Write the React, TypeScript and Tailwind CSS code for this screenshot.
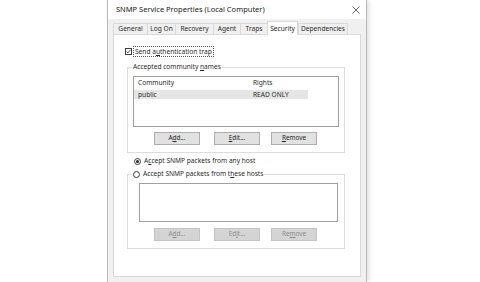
import React from "react";

// tab strip of the property sheet: label + pixel width
const tabs: [string, number][] = [
  ["General", 34],
  ["Log On", 28],
  ["Recovery", 38],
  ["Agent", 27],
  ["Traps", 27],
  ["Security", 31],
  ["Dependencies", 50],
];

const U = ({ children }: { children: React.ReactNode }) => (
  <span className="underline underline-offset-[1px] decoration-[0.5px]">{children}</span>
);

const Btn = ({ children, disabled }: { children: React.ReactNode; disabled?: boolean }) => (
  <div
    className={
      disabled
        ? "w-[46px] h-[13px] flex items-center justify-center border border-[#c4c4c4] bg-[#d4d4d4] text-[#8c8c8c] text-[6.4px] leading-none"
        : "w-[46px] h-[13px] flex items-center justify-center border border-[#adadad] bg-[#e1e1e1] text-[#262626] text-[6.4px] leading-none"
    }
  >
    {children}
  </div>
);

const Radio = ({ checked }: { checked?: boolean }) => (
  <div className="w-[7px] h-[7px] rounded-full border border-[#3a3a3a] bg-white flex items-center justify-center shrink-0">
    {checked && <div className="w-[3px] h-[3px] rounded-full bg-[#222]" />}
  </div>
);

export default function App() {
  return (
    <div className="w-[480px] h-[282px] bg-white overflow-hidden font-['Noto_Sans',sans-serif] text-[#2a2a2a] text-[6.6px]">
      <div className="ml-[107px] w-[260px] h-[282px] border-x border-[#b9b9b9] bg-[#f0f0f0] flex flex-col shadow-[2px_0_5px_rgba(0,0,0,0.12)]">
        {/* title bar */}
        <div className="h-[19px] bg-white flex items-center justify-between pl-[8px] pr-[6px] shrink-0">
          <span className="text-[7.5px] text-[#1a1a1a]">SNMP Service Properties (Local Computer)</span>
          <svg width="8" height="8" viewBox="0 0 8 8">
            <path d="M0.5 0.5L7.5 7.5M7.5 0.5L0.5 7.5" stroke="#444" strokeWidth="0.8" />
          </svg>
        </div>

        {/* tabs */}
        <div className="h-[15px] flex items-end ml-[5px] shrink-0">
          {tabs.map(([name, w]) =>
            name === "Security" ? (
              <div
                key={name}
                style={{ width: w }}
                className="h-[14px] -mb-[1px] relative z-10 bg-white border-x border-t border-[#d9d9d9] flex items-center justify-center text-[#1a1a1a]"
              >
                {name}
              </div>
            ) : (
              <div
                key={name}
                style={{ width: w }}
                className="h-[11px] bg-[#f0f0f0] border-t border-l border-[#d9d9d9] last:border-r flex items-center justify-center"
              >
                {name}
              </div>
            )
          )}
        </div>

        {/* tab page */}
        <div className="mx-[5px] mb-[5px] flex-1 bg-white border border-[#d9d9d9] flex flex-col">
          <div className="mt-[11px] ml-[11px] h-[11px] flex items-center">
            <div className="w-[7px] h-[7px] border border-[#3a3a3a] flex items-center justify-center">
              <svg width="5" height="5" viewBox="0 0 5 5">
                <path d="M0.6 2.6L1.9 3.9L4.4 0.9" stroke="#222" strokeWidth="0.8" fill="none" />
              </svg>
            </div>
            <div className="ml-[1px] h-[11px] px-[1px] border border-dotted border-[#555] flex items-center">
              Send a<U>u</U>thentication trap
            </div>
          </div>

          {/* accepted community names */}
          <div className="mt-[10px] ml-[13px] w-[218px] h-[86px] border border-[#dcdcdc] flex flex-col">
            <div className="-mt-[6px] ml-[4px] h-[10px] leading-[10px] px-[1px] bg-white w-fit">
              Accepted community <U>n</U>ames
            </div>
            <div className="mt-[4px] ml-[5px] w-[206px] h-[51px] border border-[#a0a0a0] flex flex-col">
              <div className="h-[11px] flex items-center pl-[4px]">
                <div className="w-[115px]">Community</div>
                <div>Rights</div>
              </div>
              <div className="mt-[2px] w-[174px] h-[9px] bg-[#e5e5e5] flex items-center pl-[4px]">
                <div className="w-[115px]">public</div>
                <div>READ ONLY</div>
              </div>
            </div>
            <div className="mt-[5px] ml-[26px] flex">
              <Btn>
                A<U>d</U>d...
              </Btn>
              <div className="ml-[14px]">
                <Btn>
                  <U>E</U>dit...
                </Btn>
              </div>
              <div className="ml-[11px]">
                <Btn>
                  <U>R</U>emove
                </Btn>
              </div>
            </div>
          </div>

          <div className="mt-[3px] ml-[20px] h-[10px] flex items-center gap-[3px]">
            <Radio checked />
            <span>
              A<U>c</U>cept SNMP packets from any host
            </span>
          </div>

          {/* these hosts */}
          <div className="mt-[8px] ml-[13px] w-[218px] h-[75px] border border-[#dcdcdc] flex flex-col">
            <div className="-mt-[6px] ml-[4px] h-[10px] px-[1px] bg-white w-fit flex items-center gap-[3px]">
              <Radio />
              <span>
                Accept SNMP packets from t<U>h</U>ese hosts
              </span>
            </div>
            <div className="mt-[4px] ml-[11px] w-[199px] h-[39px] border border-[#a0a0a0]" />
            <div className="mt-[6px] ml-[26px] flex">
              <Btn disabled>
                A<U>d</U>d...
              </Btn>
              <div className="ml-[14px]">
                <Btn disabled>
                  Ed<U>i</U>t...
                </Btn>
              </div>
              <div className="ml-[11px]">
                <Btn disabled>
                  Re<U>m</U>ove
                </Btn>
              </div>
            </div>
          </div>
        </div>
      </div>
    </div>
  );
}
